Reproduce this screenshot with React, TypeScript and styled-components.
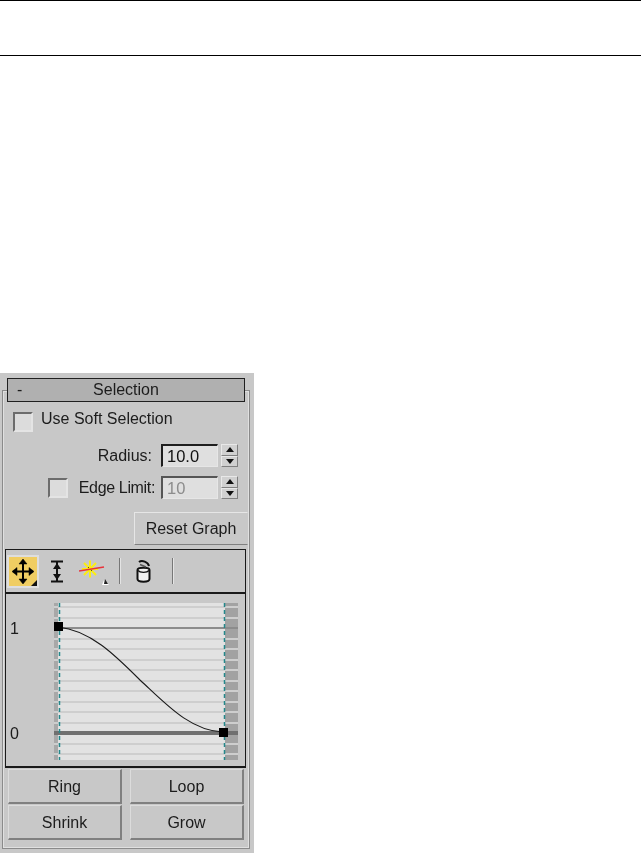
import React from "react";
import styled, { createGlobalStyle } from "styled-components";

const Global = createGlobalStyle`
  html, body { margin: 0; padding: 0; background: #fff; }
  body { font-family: "Liberation Sans", Arial, sans-serif; }
`;

const Page = styled.div`
  width: 641px;
  height: 853px;
  overflow: hidden;
  background: #fff;
  display: flex;
  flex-direction: column;
`;

const Masthead = styled.header`
  flex: none;
  height: 54px;
  border-top: 1px solid #000;
  border-bottom: 1px solid #000;
`;

const Panel = styled.section`
  margin-top: 317px;
  width: 254px;
  height: 480px;
  box-sizing: border-box;
  padding-top: 5px;
  background: #c8c8c8;
  color: #1c1c1c;
  font-size: 16px;
  flex: none;
  filter: blur(0.35px);
`;

const RolloutHeader = styled.div`
  position: relative;
  z-index: 1;
  margin-left: 7px;
  width: 238px;
  height: 24px;
  box-sizing: border-box;
  border: 1px solid #202020;
  background: #b0b0b0;
  display: flex;
  align-items: center;
  justify-content: center;
`;

const Collapse = styled.span`
  position: absolute;
  left: 9px;
  top: 2px;
`;

const Frame = styled.div`
  margin: -12px 0 0 2px;
  width: 248px;
  box-sizing: border-box;
  border: 1px solid #8a8a8a;
  box-shadow: inset 1px 1px 0 #e0e0e0, inset -1px -1px 0 #e0e0e0;
  padding: 21px 1px 8px 1px;
  display: flex;
  flex-direction: column;
`;

const Check = styled.span`
  display: block;
  flex: none;
  box-sizing: border-box;
  width: 20px;
  height: 20px;
  background: #dcdcdc;
  border-style: solid;
  border-width: 2px;
  border-color: #6c6c6c #e4e4e4 #e4e4e4 #6c6c6c;
`;

const SoftRow = styled.div`
  display: flex;
  align-items: flex-start;
  gap: 8px;
  padding-left: 9px;
  height: 20px;
  line-height: 13px;
`;

const FieldRow = styled.div<{ $top: number }>`
  display: flex;
  align-items: center;
  justify-content: flex-end;
  height: 23px;
  margin-top: ${(p) => p.$top}px;
  padding-right: 10px;
`;

const EdgeCheck = styled(Check)`
  margin-right: 11px;
`;

const Label = styled.span<{ $gap: number; $tight?: boolean }>`
  margin-right: ${(p) => p.$gap}px;
  white-space: nowrap;
  ${(p) => p.$tight && "letter-spacing: -0.35px;"}
`;

const Field = styled.div<{ $dim?: boolean }>`
  width: 57px;
  height: 23px;
  box-sizing: border-box;
  background: #dfdfdf;
  border-style: solid;
  border-width: 2px 1px 1px 2px;
  border-color: ${(p) => (p.$dim ? "#555 #e6e6e6 #e6e6e6 #555" : "#1e1e1e #e6e6e6 #e6e6e6 #1e1e1e")};
  padding-left: 4px;
  font-size: 16.5px;
  line-height: 20px;
  color: ${(p) => (p.$dim ? "#8c8c8c" : "#111")};
`;

const Spinner = styled.div`
  width: 17px;
  height: 23px;
  margin-left: 3px;
  display: flex;
  flex-direction: column;
`;

const SpinPart = styled.div<{ $down?: boolean }>`
  flex: 1;
  background: #d0d0d0;
  border-style: solid;
  border-width: 1px;
  border-color: #e8e8e8 #808080 #808080 #e8e8e8;
  display: flex;
  align-items: center;
  justify-content: center;
  &::after {
    content: "";
    border-left: 4px solid transparent;
    border-right: 4px solid transparent;
    ${(p) => (p.$down ? "border-top: 5px solid #111;" : "border-bottom: 5px solid #111;")}
  }
`;

const ResetButton = styled.button`
  align-self: flex-end;
  width: 114px;
  height: 33px;
  margin-top: 13px;
  padding: 0;
  font: inherit;
  color: inherit;
  background: #c8c8c8;
  border-style: solid;
  border-width: 1px;
  border-color: #e6e6e6 #c8c8c8 #808080 #e6e6e6;
`;

const Toolbar = styled.div`
  margin: 4px 0 0 1px;
  width: 241px;
  height: 45px;
  box-sizing: border-box;
  border: 1px solid #1a1a1a;
  border-bottom-width: 2px;
  padding: 5px 0 0 1px;
  display: flex;
  align-items: flex-start;
`;

const ActiveTool = styled.div`
  width: 32px;
  height: 33px;
  box-sizing: border-box;
  border: 2px solid #dedede;
  background: #f0cd62;
  flex: none;
`;

const ToolIcon = styled.svg<{ $left: number; $top?: number }>`
  display: block;
  flex: none;
  margin-left: ${(p) => p.$left}px;
  margin-top: ${(p) => p.$top ?? 0}px;
`;

const Graph = styled.div`
  margin-left: 1px;
  width: 241px;
  height: 174px;
  box-sizing: border-box;
  border: 1px solid #1a1a1a;
  border-top: none;
  border-bottom-width: 2px;
`;

const GraphSvg = styled.svg`
  display: block;
`;

const AxisText = styled.text`
  font-family: "Liberation Sans", Arial, sans-serif;
  font-size: 16px;
  fill: #1c1c1c;
`;

const ButtonGrid = styled.div`
  margin: 1px 0 0 4px;
  width: 236px;
  display: grid;
  grid-template-columns: 114px 114px;
  grid-auto-rows: 35px;
  column-gap: 8px;
  row-gap: 1px;
`;

const ActionButton = styled.button`
  padding: 2px 0 0;
  font: inherit;
  color: inherit;
  background: #c8c8c8;
  border-style: solid;
  border-width: 1px 2px 2px 1px;
  border-color: #dcdcdc #808080 #808080 #dcdcdc;
`;

const gridYs = Array.from({ length: 15 }, (_, i) => Math.round(606 + 10.5 * i));

export default function App() {
  return (
    <Page>
      <Global />
      <Masthead />
      <Panel>
        <RolloutHeader>
          <Collapse>-</Collapse>
          Selection
        </RolloutHeader>
        <Frame>
          <SoftRow>
            <Check />
            <span>Use Soft Selection</span>
          </SoftRow>
          <FieldRow $top={12}>
            <Label $gap={9}>Radius:</Label>
            <Field>10.0</Field>
            <Spinner>
              <SpinPart />
              <SpinPart $down />
            </Spinner>
          </FieldRow>
          <FieldRow $top={9}>
            <EdgeCheck />
            <Label $gap={6} $tight>Edge Limit:</Label>
            <Field $dim>10</Field>
            <Spinner>
              <SpinPart />
              <SpinPart $down />
            </Spinner>
          </FieldRow>
          <ResetButton>Reset Graph</ResetButton>
          <Toolbar>
            <ActiveTool>
              <svg width="28" height="29" viewBox="0 0 28 29">
                <g stroke="#000" fill="#000">
                  <path d="M4 14.5H24M14 4V25" strokeWidth="2" fill="none" />
                  <path d="M14 2l4 5h-8zM14 27l4-5h-8zM3 14.5l5-4v8zM25 14.5l-5-4v8z" strokeWidth="0.5" />
                </g>
                <path d="M28 23v6h-6z" fill="#111" />
              </svg>
            </ActiveTool>
            <ToolIcon $left={12} $top={5} width="12" height="23" viewBox="0 0 12 23">
              <path d="M0 1.5H12M0 21.5H12M6 2V21" stroke="#111" strokeWidth="2" fill="none" />
              <path d="M6 3l4 6H2zM6 20l4-6H2z" fill="#111" />
            </ToolIcon>
            <ToolIcon $left={16} width="30" height="30" viewBox="0 0 30 30">
              <path d="M11 5.5V22.5M3 14H19M5 8L17 20M17 8L5 20" stroke="#fbee12" strokeWidth="2" />
              <path d="M0 16L25 12" stroke="#e8323a" strokeWidth="1.6" />
              <path d="M9 12h1v1H9zM12 15h1v1h-1z" fill="#5a4a20" />
              <path d="M25 25l5 5h-7z" fill="#fff" />
              <path d="M26 24l3 5h-4z" fill="#222" />
            </ToolIcon>
            <ToolIcon $left={10} $top={3} width="2" height="26" viewBox="0 0 2 26">
              <rect width="1" height="26" fill="#777" />
              <rect x="1" width="1" height="26" fill="#e4e4e4" />
            </ToolIcon>
            <ToolIcon $left={15} $top={4} width="15" height="24" viewBox="0 0 15 24">
              <path d="M1.5 11C1.5 8 13.5 8 13.5 11V20C13.5 23.5 1.5 23.5 1.5 20Z" fill="#f2f2f2" stroke="#111" strokeWidth="2" />
              <path d="M2 11.5c2 2.5 9 2.5 11 0" fill="none" stroke="#111" strokeWidth="1.4" />
              <path d="M3 3C6 .5 12 3 13 7" fill="none" stroke="#111" strokeWidth="2" />
              <path d="M4 5.5l6 2.5" stroke="#555" strokeWidth="1.5" />
            </ToolIcon>
            <ToolIcon $left={21} $top={3} width="2" height="26" viewBox="0 0 2 26">
              <rect width="1" height="26" fill="#777" />
              <rect x="1" width="1" height="26" fill="#e4e4e4" />
            </ToolIcon>
          </Toolbar>
          <Graph>
            <GraphSvg width="239" height="172" viewBox="6 594 239 172">
              <rect x="54" y="603" width="184" height="157" fill="#e2e2e2" />
              <rect x="54" y="603" width="4" height="157" fill="#a8a8a8" />
              <rect x="225" y="603" width="13" height="157" fill="#a2a2a2" />
              {gridYs.map((y) => (
                <rect key={y} x="54" y={y} width="184" height="2" fill="#cecece" />
              ))}
              <rect x="58" y="627" width="180" height="2" fill="#8c8c8c" />
              <rect x="54" y="731" width="184" height="4" fill="#707070" />
              <path d="M59.5 603V760M224.5 603V760" stroke="#23878a" strokeWidth="1.5" strokeDasharray="4 3" />
              <path d="M58 627C90 630 115 655 140 680C165 703 190 731 223 732" fill="none" stroke="#1a1a1a" strokeWidth="1.1" />
              <rect x="54" y="622" width="9" height="9" fill="#000" />
              <rect x="219" y="728" width="9" height="9" fill="#000" />
              <AxisText x="10" y="634">1</AxisText>
              <AxisText x="10" y="739">0</AxisText>
            </GraphSvg>
          </Graph>
          <ButtonGrid>
            <ActionButton>Ring</ActionButton>
            <ActionButton>Loop</ActionButton>
            <ActionButton>Shrink</ActionButton>
            <ActionButton>Grow</ActionButton>
          </ButtonGrid>
        </Frame>
      </Panel>
    </Page>
  );
}
